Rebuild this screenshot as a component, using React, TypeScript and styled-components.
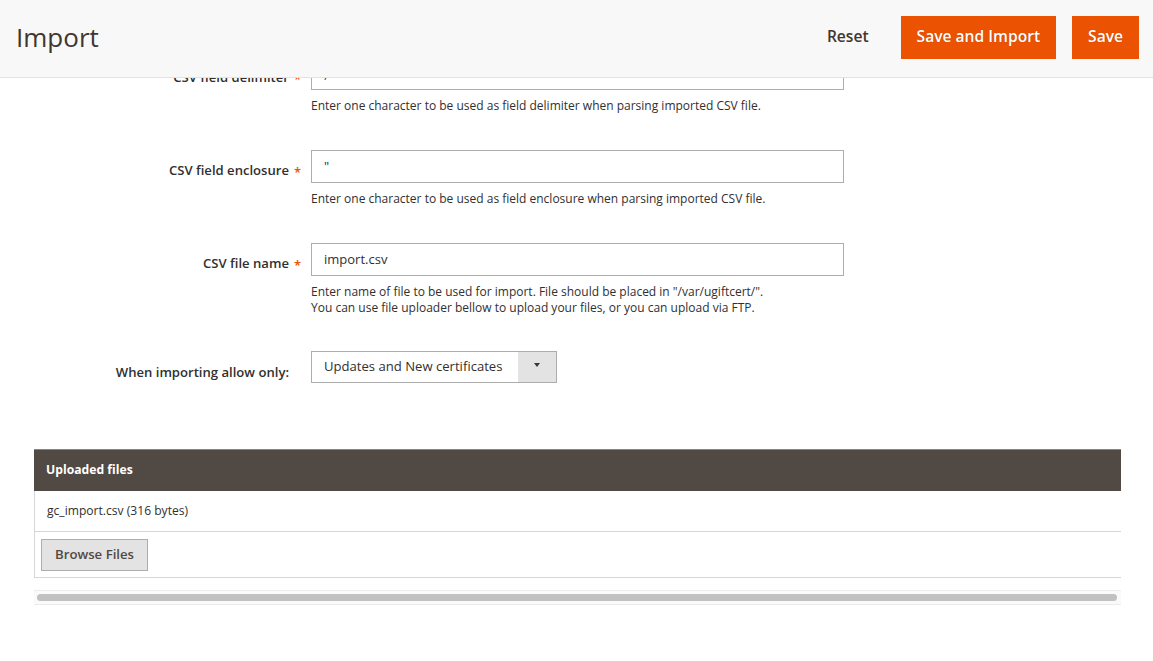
import styled, { createGlobalStyle } from 'styled-components';

const GlobalStyle = createGlobalStyle`
  html, body {
    margin: 0;
    padding: 0;
    background: #ffffff;
    font-family: 'Open Sans', 'Liberation Sans', Arial, sans-serif;
    color: #303030;
  }
  * { box-sizing: border-box; }
`;

type Field = {
  label: string;
  value: string;
  notes: string[];
  required?: boolean;
};

const fields: Field[] = [
  {
    label: 'CSV field delimiter',
    value: ',',
    notes: ['Enter one character to be used as field delimiter when parsing imported CSV file.'],
    required: true,
  },
  {
    label: 'CSV field enclosure',
    value: '"',
    notes: ['Enter one character to be used as field enclosure when parsing imported CSV file.'],
    required: true,
  },
  {
    label: 'CSV file name',
    value: 'import.csv',
    notes: [
      'Enter name of file to be used for import. File should be placed in "/var/ugiftcert/".',
      'You can use file uploader bellow to upload your files, or you can upload via FTP.',
    ],
    required: true,
  },
];

function App() {
  return (
    <Page>
      <GlobalStyle />
      <Header>
        <Title>Import</Title>
        <Actions>
          <Button styleType="link">Reset</Button>
          <Button styleType="primary">Save and Import</Button>
          <Button styleType="primary">Save</Button>
        </Actions>
      </Header>

      <Main>
        <Form>
          {fields.map((f) => (
            <Row key={f.label}>
              <Label>
                <LabelText required={f.required}>{f.label}</LabelText>
              </Label>
              <Control>
                <Input defaultValue={f.value} />
                <Note>
                  {f.notes.map((n) => (
                    <div key={n}>{n}</div>
                  ))}
                </Note>
              </Control>
            </Row>
          ))}
          <Row>
            <Label>
              <LabelText>When importing allow only:</LabelText>
            </Label>
            <Control>
              <Select>
                <SelectValue>Updates and New certificates</SelectValue>
                <SelectArrow>
                  <Caret />
                </SelectArrow>
              </Select>
            </Control>
          </Row>
        </Form>

        <Grid>
          <GridHead>Uploaded files</GridHead>
          <GridRow>gc_import.csv (316 bytes)</GridRow>
          <GridRow compact>
            <Button styleType="secondary">Browse Files</Button>
          </GridRow>
        </Grid>
        <ScrollTrack>
          <ScrollThumb />
        </ScrollTrack>
      </Main>
    </Page>
  );
}

const Page = styled.div`
  position: relative;
  width: 1153px;
  min-height: 661px;
`;

const Header = styled.header`
  position: fixed;
  top: 0;
  left: 0;
  right: 0;
  z-index: 10;
  height: 78px;
  background: #f8f8f8;
  border-bottom: 1px solid #e3e3e3;
  display: flex;
  align-items: center;
  justify-content: space-between;
  padding: 0 14px 3px 16px;
`;

const Title = styled.h1`
  margin: 0;
  font-size: 26px;
  font-weight: 400;
  color: #41362f;
  line-height: 1;
  padding-bottom: 1px;
`;

const Actions = styled.div`
  display: flex;
  align-items: center;
  gap: 16px;
  padding-top: 1px;
`;

const Button = styled.button<{ styleType: 'primary' | 'secondary' | 'link' }>`
  font-family: inherit;
  font-weight: 600;
  cursor: pointer;
  display: inline-flex;
  align-items: center;
  justify-content: center;
  ${({ styleType }) =>
    styleType === 'primary'
      ? `
    height: 43px;
    padding: 0 15px 3px;
    font-size: 15.6px;
    background: #eb5202;
    border: 1px solid #eb5202;
    color: #ffffff;
    text-shadow: 0 0 1px rgba(0,0,0,0.25);
  `
      : styleType === 'secondary'
      ? `
    height: 32px;
    padding: 0 13px 2px;
    font-size: 13.2px;
    background: #e3e3e3;
    border: 1px solid #adadad;
    color: #514943;
  `
      : `
    height: 43px;
    padding: 0 16px 3px;
    font-size: 15.6px;
    background: transparent;
    border: none;
    color: #41362f;
  `}
`;

const Main = styled.main`
  padding: 57px 32px 40px 34px;
`;

const Form = styled.div`
  display: flex;
  flex-direction: column;
  gap: 36px;
  margin-left: -34px;
`;

const Row = styled.div`
  display: grid;
  grid-template-columns: 289px 533px;
  column-gap: 22px;
  align-items: start;
`;

const Label = styled.div`
  text-align: right;
  padding-top: 11px;
  font-size: 13.1px;
  line-height: 19px;
  font-weight: 600;
  color: #303030;
  white-space: nowrap;
`;

const LabelText = styled.span<{ required?: boolean }>`
  position: relative;
  &::after {
    content: ${({ required }) => (required ? "'*'" : 'none')};
    position: absolute;
    left: calc(100% + 5px);
    top: 2px;
    font-size: 13px;
    color: #eb5202;
  }
`;

const Control = styled.div`
  display: flex;
  flex-direction: column;
  gap: 8px;
`;

const Input = styled.input`
  width: 533px;
  height: 33px;
  border: 1px solid #adadad;
  padding: 0 12px 2px;
  font-family: inherit;
  font-size: 13px;
  color: #303030;
  background: #ffffff;
  outline: none;
`;

const Note = styled.div`
  font-size: 12px;
  line-height: 16px;
  color: #303030;
`;

const Select = styled.div`
  width: 246px;
  height: 32px;
  margin-top: -1px;
  border: 1px solid #adadad;
  display: flex;
  background: #ffffff;
`;

const SelectValue = styled.div`
  flex: 1;
  padding: 0 12px 2px;
  display: flex;
  align-items: center;
  font-size: 13.1px;
  white-space: nowrap;
  color: #303030;
`;

const SelectArrow = styled.div`
  width: 38px;
  background: #e3e3e3;
  display: flex;
  justify-content: center;
  padding-top: 11px;
`;

const Caret = styled.div`
  width: 0;
  height: 0;
  border-left: 3px solid transparent;
  border-right: 3px solid transparent;
  border-top: 4px solid #41362f;
`;

const Grid = styled.div`
  margin-top: 66px;
  border-left: 1px solid #d6d6d6;
`;

const GridHead = styled.div`
  height: 42px;
  background: #514943;
  border-top: 1px solid #8a837f;
  color: #ffffff;
  font-size: 12.2px;
  font-weight: 700;
  display: flex;
  align-items: center;
  padding: 0 0 2px 12px;
  margin-left: -1px;
`;

const GridRow = styled.div<{ compact?: boolean }>`
  border-bottom: 1px solid #d6d6d6;
  font-size: 12.1px;
  color: #303030;
  display: flex;
  align-items: center;
  height: ${({ compact }) => (compact ? '46px' : '41px')};
  padding: ${({ compact }) => (compact ? '0 0 0 6px' : '0 0 2px 12px')};
`;

const ScrollTrack = styled.div`
  margin-top: 12px;
  height: 15px;
  border-top: 1px solid #ececec;
  border-bottom: 1px solid #ececec;
  background: #fafafa;
  padding: 3px 4px 0 3px;
`;

const ScrollThumb = styled.div`
  height: 7px;
  border-radius: 4px;
  background: #c1c1c1;
`;

export default App;
